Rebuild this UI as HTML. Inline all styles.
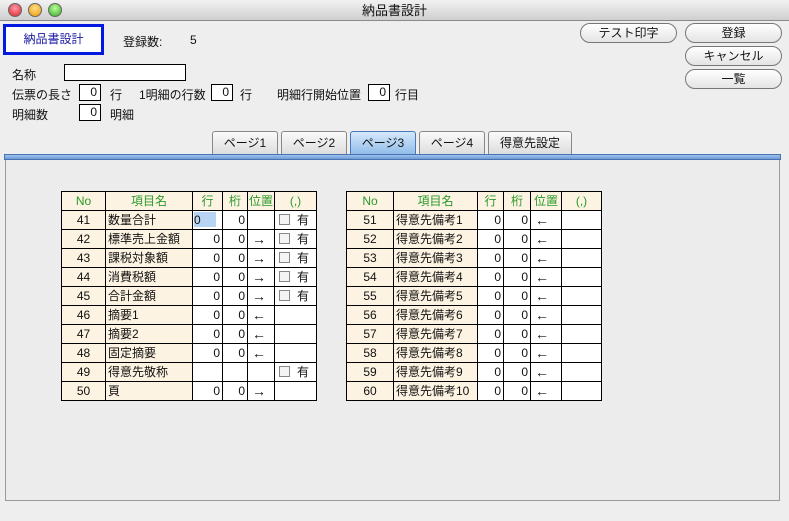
<!DOCTYPE html>
<html><head><meta charset="utf-8"><style>
*{margin:0;padding:0;box-sizing:border-box}
body{width:789px;height:521px;overflow:hidden;background:#eeeeee;font-family:"Liberation Sans","Noto Sans CJK JP",sans-serif;font-size:12px;color:#111;position:relative}
.a{position:absolute;white-space:nowrap}
.tb{position:absolute;left:0;top:0;width:789px;height:21px;background:linear-gradient(#f2f2f2,#cfcfcf);border-bottom:1px solid #8a8a8a;text-align:center;line-height:21px;font-size:13px}
.dot{position:absolute;top:3px;width:14px;height:14px;border-radius:50%;border:1px solid #666}
.box{position:absolute;background:#fff;border:1px solid #000;text-align:right;padding-right:3px;line-height:15px;height:17px}
.btn{position:absolute;height:20px;border:1px solid #777;border-radius:10px;background:linear-gradient(#fff,#e4e4e4);text-align:center;line-height:18px;font-size:12px}
.tab{position:absolute;top:131px;height:24px;border:1px solid #888;border-bottom:none;border-radius:3px 3px 0 0;background:linear-gradient(#fafafa,#dcdcdc);text-align:center;line-height:22px;font-size:12px}
table{position:absolute;border-collapse:collapse;table-layout:fixed;background:#fff}
td{border:1px solid #000;height:19px;padding:0 2px;font-size:12px;line-height:17px;overflow:hidden;white-space:nowrap}
tr:first-child td{background:#fdf3e2;color:#2a9a2a;text-align:center;padding:0}
td.c{background:#fdf3e2;text-align:center}
td.n{background:#fdf3e2}
td.r{text-align:right}
td.ar{font-size:14px;padding-left:4px}
.cb{display:inline-block;width:11px;height:11px;border:1px solid #888;background:#f4f4f4;vertical-align:-1px;margin:0 7px 0 2px}
</style></head><body>
<div class="tb">納品書設計</div>
<div class="dot" style="left:8px;background:radial-gradient(circle at 50% 35%,#f9a,#d22)"></div>
<div class="dot" style="left:28px;background:radial-gradient(circle at 50% 35%,#fd8,#e90)"></div>
<div class="dot" style="left:48px;background:radial-gradient(circle at 50% 35%,#bf9,#3a2)"></div>

<div class="a" style="left:3px;top:24px;width:101px;height:31px;border:3px solid #0018e0;background:#fff;color:#1a1aa0;text-align:center;line-height:25px">納品書設計</div>
<div class="a" style="left:123px;top:33px">登録数:</div>
<div class="a" style="left:190px;top:33px">5</div>
<div class="btn" style="left:580px;top:23px;width:97px">テスト印字</div>
<div class="btn" style="left:685px;top:23px;width:97px">登録</div>
<div class="btn" style="left:685px;top:46px;width:97px">キャンセル</div>
<div class="btn" style="left:685px;top:69px;width:97px">一覧</div>

<div class="a" style="left:12px;top:66px">名称</div>
<div class="box" style="left:64px;top:64px;width:122px"></div>
<div class="a" style="left:12px;top:86px">伝票の長さ</div>
<div class="box" style="left:79px;top:84px;width:22px">0</div>
<div class="a" style="left:110px;top:86px">行</div>
<div class="a" style="left:139px;top:86px">1明細の行数</div>
<div class="box" style="left:211px;top:84px;width:22px">0</div>
<div class="a" style="left:240px;top:86px">行</div>
<div class="a" style="left:277px;top:86px">明細行開始位置</div>
<div class="box" style="left:368px;top:84px;width:22px">0</div>
<div class="a" style="left:395px;top:86px">行目</div>
<div class="a" style="left:12px;top:106px">明細数</div>
<div class="box" style="left:79px;top:104px;width:22px">0</div>
<div class="a" style="left:110px;top:106px">明細</div>

<div class="tab" style="left:212px;width:66px">ページ1</div>
<div class="tab" style="left:281px;width:66px">ページ2</div>
<div class="tab" style="left:350px;width:66px;background:linear-gradient(#d6e8fb,#8ebbe8);border-color:#4a78b8">ページ3</div>
<div class="tab" style="left:419px;width:66px">ページ4</div>
<div class="tab" style="left:488px;width:84px">得意先設定</div>
<div class="a" style="left:4px;top:154px;width:777px;height:6px;background:linear-gradient(#9ec2ee,#6d9bd8);border:1px solid #4a72b0"></div>
<div class="a" style="left:5px;top:160px;width:775px;height:341px;background:#ececec;border:1px solid #9a9a9a;border-top:none"></div>

<table style="left:61px;top:191px;width:255px">
<colgroup><col style="width:44px"><col style="width:87px"><col style="width:30px"><col style="width:25px"><col style="width:27px"><col style="width:42px"></colgroup>
<tr><td>No</td><td>項目名</td><td>行</td><td>桁</td><td>位置</td><td>(,)</td></tr>
<tr><td class="c">41</td><td class="n">数量合計</td><td style="padding:0"><span style="display:inline-block;width:22px;height:15px;background:#b8d4f4;margin:1px">0</span></td><td class="r">0</td><td></td><td><span class="cb"></span>有</td></tr>
<tr><td class="c">42</td><td class="n">標準売上金額</td><td class="r">0</td><td class="r">0</td><td class="ar">→</td><td><span class="cb"></span>有</td></tr>
<tr><td class="c">43</td><td class="n">課税対象額</td><td class="r">0</td><td class="r">0</td><td class="ar">→</td><td><span class="cb"></span>有</td></tr>
<tr><td class="c">44</td><td class="n">消費税額</td><td class="r">0</td><td class="r">0</td><td class="ar">→</td><td><span class="cb"></span>有</td></tr>
<tr><td class="c">45</td><td class="n">合計金額</td><td class="r">0</td><td class="r">0</td><td class="ar">→</td><td><span class="cb"></span>有</td></tr>
<tr><td class="c">46</td><td class="n">摘要1</td><td class="r">0</td><td class="r">0</td><td class="ar">←</td><td></td></tr>
<tr><td class="c">47</td><td class="n">摘要2</td><td class="r">0</td><td class="r">0</td><td class="ar">←</td><td></td></tr>
<tr><td class="c">48</td><td class="n">固定摘要</td><td class="r">0</td><td class="r">0</td><td class="ar">←</td><td></td></tr>
<tr><td class="c">49</td><td class="n">得意先敬称</td><td></td><td></td><td></td><td><span class="cb"></span>有</td></tr>
<tr><td class="c">50</td><td class="n">頁</td><td class="r">0</td><td class="r">0</td><td class="ar">→</td><td></td></tr>
</table>

<table style="left:346px;top:191px;width:255px">
<colgroup><col style="width:47px"><col style="width:84px"><col style="width:26px"><col style="width:27px"><col style="width:31px"><col style="width:40px"></colgroup>
<tr><td>No</td><td>項目名</td><td>行</td><td>桁</td><td>位置</td><td>(,)</td></tr>
<tr><td class="c">51</td><td class="n">得意先備考1</td><td class="r">0</td><td class="r">0</td><td class="ar">←</td><td></td></tr>
<tr><td class="c">52</td><td class="n">得意先備考2</td><td class="r">0</td><td class="r">0</td><td class="ar">←</td><td></td></tr>
<tr><td class="c">53</td><td class="n">得意先備考3</td><td class="r">0</td><td class="r">0</td><td class="ar">←</td><td></td></tr>
<tr><td class="c">54</td><td class="n">得意先備考4</td><td class="r">0</td><td class="r">0</td><td class="ar">←</td><td></td></tr>
<tr><td class="c">55</td><td class="n">得意先備考5</td><td class="r">0</td><td class="r">0</td><td class="ar">←</td><td></td></tr>
<tr><td class="c">56</td><td class="n">得意先備考6</td><td class="r">0</td><td class="r">0</td><td class="ar">←</td><td></td></tr>
<tr><td class="c">57</td><td class="n">得意先備考7</td><td class="r">0</td><td class="r">0</td><td class="ar">←</td><td></td></tr>
<tr><td class="c">58</td><td class="n">得意先備考8</td><td class="r">0</td><td class="r">0</td><td class="ar">←</td><td></td></tr>
<tr><td class="c">59</td><td class="n">得意先備考9</td><td class="r">0</td><td class="r">0</td><td class="ar">←</td><td></td></tr>
<tr><td class="c">60</td><td class="n">得意先備考10</td><td class="r">0</td><td class="r">0</td><td class="ar">←</td><td></td></tr>
</table>
</body></html>
